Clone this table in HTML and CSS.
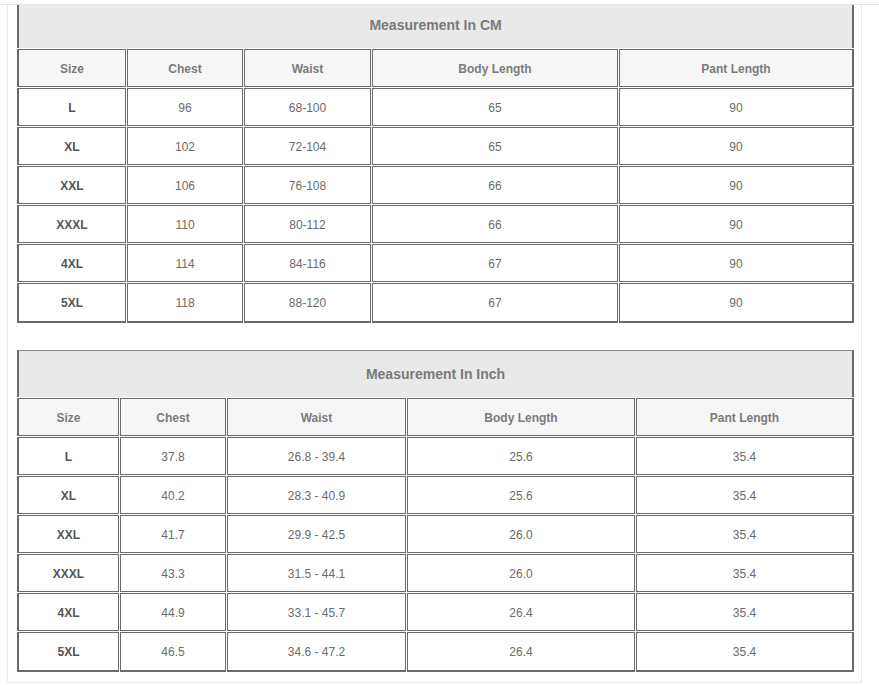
FILE: index.html
```html
<!DOCTYPE html>
<html>
<head>
<meta charset="utf-8">
<link rel="stylesheet" href="styles.css">
</head>
<body>
<div class="page">
  <div class="box">
    <table class="size-table cm">
      <colgroup><col class="c1"><col class="c2"><col class="c3"><col class="c4"><col class="c5"></colgroup>
      <tr class="title-row"><td colspan="5" class="title">Measurement In CM</td></tr>
      <tr class="head-row"><td>Size</td><td>Chest</td><td>Waist</td><td>Body Length</td><td>Pant Length</td></tr>
      <tr><td class="sz">L</td><td>96</td><td>68-100</td><td>65</td><td>90</td></tr>
      <tr><td class="sz">XL</td><td>102</td><td>72-104</td><td>65</td><td>90</td></tr>
      <tr><td class="sz">XXL</td><td>106</td><td>76-108</td><td>66</td><td>90</td></tr>
      <tr><td class="sz">XXXL</td><td>110</td><td>80-112</td><td>66</td><td>90</td></tr>
      <tr><td class="sz">4XL</td><td>114</td><td>84-116</td><td>67</td><td>90</td></tr>
      <tr class="last"><td class="sz">5XL</td><td>118</td><td>88-120</td><td>67</td><td>90</td></tr>
    </table>
    <table class="size-table inch">
      <colgroup><col class="c1"><col class="c2"><col class="c3"><col class="c4"><col class="c5"></colgroup>
      <tr class="title-row"><td colspan="5" class="title">Measurement In Inch</td></tr>
      <tr class="head-row"><td>Size</td><td>Chest</td><td>Waist</td><td>Body Length</td><td>Pant Length</td></tr>
      <tr><td class="sz">L</td><td>37.8</td><td>26.8 - 39.4</td><td>25.6</td><td>35.4</td></tr>
      <tr><td class="sz">XL</td><td>40.2</td><td>28.3 - 40.9</td><td>25.6</td><td>35.4</td></tr>
      <tr><td class="sz">XXL</td><td>41.7</td><td>29.9 - 42.5</td><td>26.0</td><td>35.4</td></tr>
      <tr><td class="sz">XXXL</td><td>43.3</td><td>31.5 - 44.1</td><td>26.0</td><td>35.4</td></tr>
      <tr><td class="sz">4XL</td><td>44.9</td><td>33.1 - 45.7</td><td>26.4</td><td>35.4</td></tr>
      <tr class="last"><td class="sz">5XL</td><td>46.5</td><td>34.6 - 47.2</td><td>26.4</td><td>35.4</td></tr>
    </table>
  </div>
</div>
</body>
</html>
```
FILE: styles.css
```css
html, body {
  margin: 0;
  padding: 0;
  background: #ffffff;
}
body {
  padding-top: 4px;
  font-family: "Liberation Sans", Arial, sans-serif;
  font-size: 12px;
  color: #666666;
}
.page {
  border-top: 1px solid #e4e4e4;
}
.box {
  margin-left: 7px;
  box-sizing: border-box;
  border: 1px solid #ececec;
  border-top: 0;
  padding: 0 6px 9px 8px;
  overflow: hidden;
  width: 855px;
}
.size-table {
  width: 839px;
  table-layout: fixed;
  border-collapse: separate;
  border-spacing: 1px;
}
.size-table.cm {
  margin-top: -5px;
  margin-bottom: 25px;
}
.cm .c1 { width: 109px; }
.cm .c2 { width: 116px; }
.cm .c3 { width: 127px; }
.cm .c4 { width: 246px; }
.cm .c5 { width: 235px; }
.inch .c1 { width: 102px; }
.inch .c2 { width: 106px; }
.inch .c3 { width: 179px; }
.inch .c4 { width: 228px; }
.inch .c5 { width: 218px; }
.size-table td {
  border: 1px solid #6a6a6a;
  padding: 1px 0 0 0;
  text-align: center;
  vertical-align: middle;
  line-height: 14px;
  color: #6b6b6b;
  background: #ffffff;
}
.size-table tr { height: 38px; }
.size-table tr.last { height: 40px; }
.size-table tr.last td {
  border-bottom-width: 2px;
  padding-top: 0;
}
.size-table td:first-child { border-left-width: 2px; }
.size-table td:last-child { border-right-width: 2px; }
.size-table tr.title-row { height: 47px; }
.size-table td.title {
  background: #e9e9e9;
  border-top: 1px solid #8a8a8a;
  border-bottom: 0;
  padding-top: 0;
  font-size: 14px;
  font-weight: bold;
  color: #7a7a7a;
}
.head-row td {
  background: #f6f6f6;
  font-weight: bold;
  color: #7b7b7b;
}
.size-table td.sz {
  font-weight: bold;
  color: #555555;
}
```
